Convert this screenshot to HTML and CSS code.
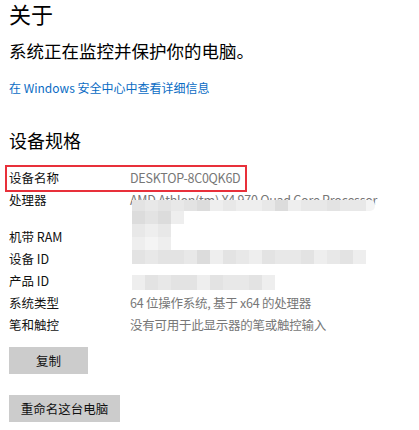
FILE: index.html
```html
<!DOCTYPE html>
<html lang="zh-CN">
<head>
<meta charset="utf-8">
<link rel="stylesheet" href="styles.css">
</head>
<body>
<div class="page">
  <h1 class="title">关于</h1>
  <p class="subtitle">系统正在监控并保护你的电脑。</p>
  <a class="link" href="#">在 Windows 安全中心中查看详细信息</a>
  <h2 class="section">设备规格</h2>
  <div class="specs">
    <div class="row"><span class="label">设备名称</span><span class="value">DESKTOP-8C0QK6D</span></div>
    <div class="row tall"><span class="label">处理器</span><span class="value">AMD Athlon(tm) X4 970 Quad Core Processor</span></div>
    <div class="row"><span class="label">机带 RAM</span><span class="value"></span></div>
    <div class="row"><span class="label">设备 ID</span><span class="value"></span></div>
    <div class="row"><span class="label">产品 ID</span><span class="value"></span></div>
    <div class="row"><span class="label">系统类型</span><span class="value">64 位操作系统, 基于 x64 的处理器</span></div>
    <div class="row"><span class="label">笔和触控</span><span class="value">没有可用于此显示器的笔或触控输入</span></div>
  </div>
  <button class="btn btn-copy">复制</button>
  <button class="btn btn-rename">重命名这台电脑</button>

  <div class="highlight"></div>

  <div class="mosaic">
    <div class="mrow ra">
      <i class="g2"></i><i class="g3"></i><i class="g2"></i><i class="g3"></i><i class="g2"></i><i class="g1"></i><i class="g4"></i><i class="g3"></i><i class="g4"></i><i class="g4"></i><i class="g3"></i><i class="g1"></i><i class="g4"></i><i class="g3"></i><i class="g3"></i><i class="g2"></i><i class="g3"></i><i class="g3"></i><i class="g5 end"></i>
    </div>
    <div class="mrow rb">
      <i class="g1"></i><i class="g2"></i><i class="g1"></i><i class="g4"></i>
    </div>
    <div class="mrow rc">
      <i class="g3"></i><i class="g4"></i><i class="g3"></i>
    </div>
    <div class="mrow rd">
      <i class="g4"></i><i class="g5"></i><i class="g4"></i>
    </div>
    <div class="mrow re">
      <i class="g2"></i><i class="g3"></i><i class="g2"></i><i class="g2"></i><i class="g3"></i><i class="g1"></i><i class="g4"></i><i class="g2"></i><i class="g3"></i><i class="g4"></i><i class="g2"></i><i class="g3"></i><i class="g3"></i><i class="g2"></i><i class="g4"></i><i class="g3"></i><i class="g2"></i><i class="g4"></i>
    </div>
    <div class="mgap"></div>
    <div class="mrow rf">
      <i class="g4"></i><i class="g2"></i><i class="g3"></i><i class="g2"></i><i class="g2"></i><i class="g4"></i><i class="g2"></i><i class="g3"></i><i class="g3"></i><i class="g2"></i><i class="g4"></i>
    </div>
  </div>
</div>
</body>
</html>
```

FILE: styles.css
```css
html, body {
  margin: 0;
  padding: 0;
  background: #ffffff;
}

.page {
  position: relative;
  padding: 0 0 0 9px;
  font-family: "Noto Sans CJK SC", "Noto Sans", sans-serif;
  color: #000;
  width: 410px;
  height: 430px;
  overflow: hidden;
}

.title {
  margin: 0;
  font-size: 22px;
  font-weight: 400;
  line-height: 26px;
}

.subtitle {
  margin: 13px 0 0 0;
  font-size: 17.5px;
  line-height: 24px;
}

.link {
  display: block;
  margin-top: 16px;
  font-size: 12px;
  line-height: 18px;
  color: #0a6cc4;
  text-decoration: none;
}

.section {
  margin: 30px 0 0 0;
  font-size: 18px;
  font-weight: 400;
  line-height: 26px;
}

.specs {
  margin-top: 14px;
  display: flex;
  flex-direction: column;
}

.row {
  display: flex;
  height: 22px;
  font-size: 12.5px;
  line-height: 22px;
}

.row.tall {
  height: 37px;
}

.label {
  width: 121px;
  flex: none;
  color: #111;
}

.value {
  color: #777;
  white-space: nowrap;
  letter-spacing: -0.25px;
}

.btn {
  display: block;
  border: none;
  background: #cccccc;
  font-family: "Noto Sans CJK SC", sans-serif;
  font-size: 12.5px;
  color: #111;
  height: 27px;
  padding: 0;
  line-height: 27px;
}

.btn-copy {
  margin-top: 11px;
  width: 79px;
}

.btn-rename {
  margin-top: 21px;
  width: 111px;
}

.highlight {
  position: absolute;
  left: 5px;
  top: 165px;
  width: 238px;
  height: 23px;
  border: 2px solid #e8303a;
}

.mosaic {
  position: absolute;
  left: 132px;
  top: 200px;
  display: flex;
  flex-direction: column;
}

.mrow {
  display: flex;
}

.mrow i {
  display: block;
  width: 13px;
  height: 100%;
}

.ra { height: 11px; }
.rb { height: 13px; }
.rc { height: 13px; }
.rd { height: 13px; }
.re { height: 14px; }
.rf { height: 15px; }
.mgap { height: 11px; }

.mrow i.end {
  width: 9px;
  border-radius: 0 5px 5px 0;
}

.g1 { background: #dcdcdc; }
.g2 { background: #e3e3e3; }
.g3 { background: #e8e8e8; }
.g4 { background: #eeeeee; }
.g5 { background: #f4f4f4; }
```
